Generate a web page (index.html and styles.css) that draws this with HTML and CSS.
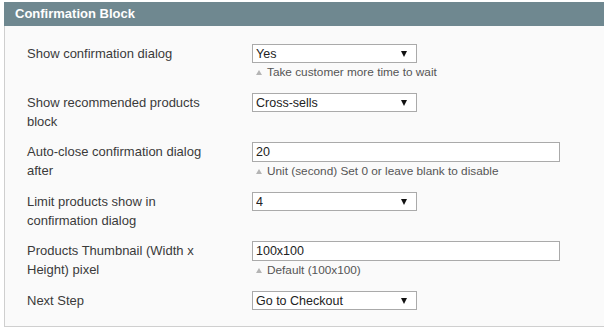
FILE: index.html
```html
<!DOCTYPE html>
<html lang="en">
<head>
    <meta charset="UTF-8">
    <title>Confirmation Block</title>
    <link rel="stylesheet" href="styles.css">
</head>
<body>
    <div class="section">
        <div class="section-head">Confirmation Block</div>
        <div class="section-body">
            <div class="row">
                <div class="label">Show confirmation dialog</div>
                <div class="value">
                    <div class="select-wrap">
                        <select class="select"><option>Yes</option><option>No</option></select>
                        <span class="arrow"></span>
                    </div>
                    <p class="note">Take customer more time to wait</p>
                </div>
            </div>
            <div class="row">
                <div class="label">Show recommended products block</div>
                <div class="value">
                    <div class="select-wrap">
                        <select class="select"><option>Cross-sells</option><option>Related</option><option>Up-sells</option></select>
                        <span class="arrow"></span>
                    </div>
                </div>
            </div>
            <div class="row">
                <div class="label">Auto-close confirmation dialog after</div>
                <div class="value">
                    <input class="text" type="text" value="20">
                    <p class="note">Unit (second) Set 0 or leave blank to disable</p>
                </div>
            </div>
            <div class="row">
                <div class="label">Limit products show in confirmation dialog</div>
                <div class="value">
                    <div class="select-wrap">
                        <select class="select"><option>4</option><option>8</option></select>
                        <span class="arrow"></span>
                    </div>
                </div>
            </div>
            <div class="row">
                <div class="label">Products Thumbnail (Width x Height) pixel</div>
                <div class="value">
                    <input class="text" type="text" value="100x100">
                    <p class="note">Default (100x100)</p>
                </div>
            </div>
            <div class="row">
                <div class="label">Next Step</div>
                <div class="value">
                    <div class="select-wrap">
                        <select class="select"><option>Go to Checkout</option><option>Continue Shopping</option></select>
                        <span class="arrow"></span>
                    </div>
                </div>
            </div>
        </div>
    </div>
</body>
</html>
```

FILE: styles.css
```css
body, html {
    margin: 0;
    background: #ffffff;
    font-family: "Liberation Sans", Arial, sans-serif;
}

.section {
    margin: 2px 0 0 4px;
}

.section-head {
    height: 24px;
    line-height: 23px;
    padding-left: 11px;
    background-color: #6f8890;
    color: #ffffff;
    font-size: 13px;
    font-weight: bold;
}

.section-body {
    padding: 13px 0 10px 22px;
    border-left: 1px solid #cfcfcf;
    border-bottom: 1px solid #cfcfcf;
    background-color: #fafafa;
}

.row {
    display: flex;
    padding: 5px 0 6px;
}

.label {
    width: 185px;
    margin-right: 40px;
    font-size: 13px;
    line-height: 19px;
    color: #3a3a3a;
}

.value {
    display: flex;
    flex-direction: column;
    align-items: flex-start;
}

.select-wrap {
    position: relative;
}

.select {
    display: block;
    appearance: none;
    -webkit-appearance: none;
    width: 165px;
    height: 19px;
    margin: 0;
    padding: 0 0 0 3px;
    border: 1px solid #aaaaaa;
    border-radius: 0;
    background: #ffffff;
    color: #222222;
    font-family: inherit;
    font-size: 12.5px;
}

.arrow {
    position: absolute;
    top: 7px;
    right: 10px;
    width: 0;
    height: 0;
    border-left: 3.5px solid transparent;
    border-right: 3.5px solid transparent;
    border-top: 6px solid #111111;
    pointer-events: none;
}

.text {
    display: block;
    box-sizing: border-box;
    width: 308px;
    height: 20px;
    margin: 0;
    padding: 0 3px;
    border: 1px solid #aaaaaa;
    background: #ffffff;
    color: #222222;
    font-family: inherit;
    font-size: 12.5px;
}

.note {
    margin: 0;
    padding-left: 15px;
    position: relative;
    font-size: 11.8px;
    line-height: 19px;
    color: #555555;
}

.note::before {
    content: "";
    position: absolute;
    left: 4px;
    top: 7px;
    border-left: 3px solid transparent;
    border-right: 3px solid transparent;
    border-bottom: 5px solid #b4b4b4;
}
```
